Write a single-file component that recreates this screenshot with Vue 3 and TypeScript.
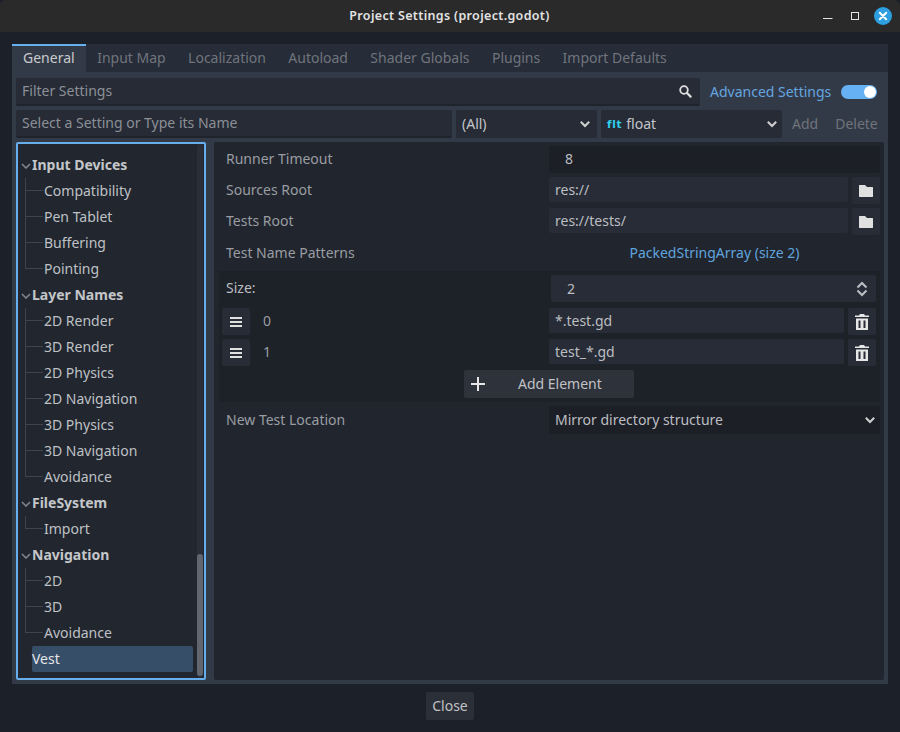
<script setup lang="ts">
const tabs = ['General', 'Input Map', 'Localization', 'Autoload', 'Shader Globals', 'Plugins', 'Import Defaults']
const groups = [
  { name: 'Input Devices', items: ['Compatibility', 'Pen Tablet', 'Buffering', 'Pointing'] },
  { name: 'Layer Names', items: ['2D Render', '3D Render', '2D Physics', '2D Navigation', '3D Physics', '3D Navigation', 'Avoidance'] },
  { name: 'FileSystem', items: ['Import'] },
  { name: 'Navigation', items: ['2D', '3D', 'Avoidance'] },
]
const elements = [
  { index: 0, value: '*.test.gd' },
  { index: 1, value: 'test_*.gd' },
]
</script>

<template>
  <div class="window">
    <header class="titlebar">
      <span class="title">Project Settings (project.godot)</span>
      <div class="controls">
        <svg width="16" height="16" viewBox="0 0 16 16"><path d="M5 10.500h9.500" stroke="#e4e4e4" stroke-width="1" /></svg>
        <svg width="16" height="16" viewBox="0 0 16 16"><rect x="5.500" y="4.500" width="7" height="7" fill="none" stroke="#e4e4e4" stroke-width="1" /></svg>
        <svg width="18" height="18" viewBox="0 0 18 18"><circle cx="9" cy="9" r="9" fill="#2d9fe0" /><path d="M5.800 5.800l6.400 6.400M12.200 5.800l-6.400 6.400" stroke="#fff" stroke-width="2" stroke-linecap="round" /></svg>
      </div>
    </header>

    <main class="content">
      <nav class="tabs">
        <span v-for="(t, i) in tabs" :key="t" class="tab" :class="{ active: i === 0 }">{{ t }}</span>
      </nav>

      <section class="panel">
        <div class="row-filter">
          <div class="input filter">
            <span class="muted">Filter Settings</span>
            <svg width="16" height="16" viewBox="0 0 16 16"><circle cx="7" cy="7" r="3.800" fill="none" stroke="#e0e0e0" stroke-width="1.800" /><path d="M10 10l3.600 3.600" stroke="#e0e0e0" stroke-width="2.200" stroke-linecap="round" /></svg>
          </div>
          <span class="advanced">Advanced Settings</span>
          <span class="toggle"><i></i></span>
        </div>

        <div class="row-add">
          <div class="input name"><span class="muted">Select a Setting or Type its Name</span></div>
          <div class="input select all">
            <span>(All)</span>
            <svg class="chev" width="12" height="8" viewBox="0 0 12 8"><path d="M1.800 1.800L6 6l4.200-4.200" fill="none" stroke="#d0d0d0" stroke-width="2" /></svg>
          </div>
          <div class="input select type">
            <span class="type-label"><b class="flt">flt</b>float</span>
            <svg class="chev" width="12" height="8" viewBox="0 0 12 8"><path d="M1.800 1.800L6 6l4.200-4.200" fill="none" stroke="#d0d0d0" stroke-width="2" /></svg>
          </div>
          <span class="disabled add">Add</span>
          <span class="disabled del">Delete</span>
        </div>

        <div class="split">
          <aside class="tree">
            <div v-for="g in groups" :key="g.name" class="group">
              <div class="head">
                <svg width="10" height="6" viewBox="0 0 10 6"><path d="M1 1l4 4 4-4" fill="none" stroke="#80848b" stroke-width="1.600" /></svg>
                <span>{{ g.name }}</span>
              </div>
              <div class="children">
                <div v-for="item in g.items" :key="item" class="leaf">{{ item }}</div>
              </div>
            </div>
            <div class="vest">Vest</div>
            <div class="scroll"><i></i></div>
          </aside>

          <div class="inspector">
            <div class="prop first">
              <label>Runner Timeout</label>
              <div class="field wide num">8</div>
            </div>
            <div class="prop path">
              <label>Sources Root</label>
              <div class="field grow">res://</div>
              <span class="iconbtn">
                <svg width="14" height="12" viewBox="0 0 14 12"><path d="M0 .5C0 .2.200 0 .5 0H6l2 2h5.500c.3 0 .5.200.5.500V11.500c0 .3-.2.500-.5.500H.5c-.3 0-.5-.2-.5-.5z" fill="#e0e0e0" /></svg>
              </span>
            </div>
            <div class="prop path">
              <label>Tests Root</label>
              <div class="field grow">res://tests/</div>
              <span class="iconbtn">
                <svg width="14" height="12" viewBox="0 0 14 12"><path d="M0 .5C0 .2.200 0 .5 0H6l2 2h5.500c.3 0 .5.200.5.500V11.500c0 .3-.2.500-.5.500H.5c-.3 0-.5-.2-.5-.5z" fill="#e0e0e0" /></svg>
              </span>
            </div>
            <div class="prop link-row">
              <label>Test Name Patterns</label>
              <span class="link">PackedStringArray (size 2)</span>
            </div>

            <div class="array">
              <div class="size-row">
                <label>Size:</label>
                <div class="field size">
                  <span>2</span>
                  <svg width="12" height="16" viewBox="0 0 12 16"><path d="M1.500 6.500L6 2l4.500 4.500M1.500 9.500L6 14l4.500-4.500" fill="none" stroke="#bdbfc3" stroke-width="2" /></svg>
                </div>
              </div>
              <div v-for="e in elements" :key="e.index" class="el-row">
                <span class="handle">
                  <svg width="12" height="10" viewBox="0 0 12 10"><path d="M0 1h12M0 5h12M0 9h12" stroke="#e0e0e0" stroke-width="2" /></svg>
                </span>
                <span class="idx">{{ e.index }}</span>
                <div class="field grow">{{ e.value }}</div>
                <span class="iconbtn">
                  <svg width="14" height="16" viewBox="0 0 14 16"><path d="M5 0h4l1 1.500h4V3H0V1.500h4z" fill="#e6e6e6" /><path d="M1 4.500h12V16H1z" fill="#e6e6e6" /><path d="M3.500 6.500v7.500h2v-7.500zM8.500 6.500v7.500h2v-7.500z" fill="#272c36" /></svg>
                </span>
              </div>
              <div class="add-row">
                <span class="add-el">
                  <svg width="14" height="14" viewBox="0 0 14 14"><path d="M7 0v14M0 7h14" stroke="#e6e6e6" stroke-width="2" /></svg>
                  <span>Add Element</span>
                </span>
              </div>
            </div>

            <div class="prop last">
              <label>New Test Location</label>
              <div class="field wide opt">
                <span>Mirror directory structure</span>
                <svg width="12" height="8" viewBox="0 0 12 8"><path d="M1.800 1.800L6 6l4.200-4.200" fill="none" stroke="#d0d0d0" stroke-width="2" /></svg>
              </div>
            </div>
          </div>
        </div>
      </section>

      <footer class="footer"><span class="close">Close</span></footer>
    </main>
  </div>
</template>

<style>
html, body { margin: 0; background: #1c2028; }
</style>

<style scoped>
.window {
  width: 900px;
  height: 732px;
  display: flex;
  flex-direction: column;
  background: #1c2028;
  font-family: "Noto Sans", sans-serif;
  font-size: 14px;
  line-height: 20px;
  color: #c4c6ca;
  overflow: hidden;
}
.titlebar {
  height: 32px;
  flex: none;
  background: #2a2a2a;
  border-radius: 6px 6px 0 0;
  display: flex;
  align-items: center;
  justify-content: center;
  position: relative;
}
.title {
  font-size: 12.500px;
  font-weight: 600;
  color: #e2e2e2;
  letter-spacing: .33px;
  margin-left: -1px;
}
.controls {
  position: absolute;
  right: 8px;
  top: 7px;
  display: flex;
  align-items: center;
  gap: 12px;
}
.content {
  flex: 1;
  padding: 12px 12px 12px;
  display: flex;
  flex-direction: column;
}
.tabs {
  height: 28px;
  flex: none;
  display: flex;
  background: #262c38;
  color: #70747c;
}
.tab {
  padding: 2px 11.200px 0;
  line-height: 24px;
  box-sizing: border-box;
}
.tab.active {
  width: 74px;
  border-top: 2px solid #66aeec;
  padding: 0 11px;
  background: #333a47;
  color: #c8cacd;
}
.panel {
  height: 612px;
  flex: none;
  background: #333a47;
  padding: 6px 4px 4px;
  box-sizing: border-box;
  display: flex;
  flex-direction: column;
  gap: 4px;
}
.input {
  height: 28px;
  box-sizing: border-box;
  background: #262b36;
  border-bottom: 2px solid #1f232c;
  border-radius: 2px;
  padding: 0 6px;
  display: flex;
  align-items: center;
  justify-content: space-between;
}
.muted { color: #8c9096; }
.row-filter {
  height: 28px;
  display: flex;
  align-items: center;
}
.filter { width: 684px; padding-right: 7px; }
.advanced { margin-left: 10px; color: #64a6e0; }
.toggle {
  margin-left: 10px;
  width: 36px;
  height: 14px;
  border-radius: 7px;
  background: #66b0f4;
  position: relative;
}
.toggle i {
  position: absolute;
  right: 1px;
  top: 1px;
  width: 12px;
  height: 12px;
  border-radius: 50%;
  background: #fff;
}
.row-add {
  height: 28px;
  display: flex;
  align-items: center;
}
.name { width: 436px; }
.select { border-bottom: 0; }
.all { width: 141px; margin-left: 4px; }
.type { width: 181px; margin-left: 4px; padding-right: 4px; }
.type-label { display: flex; align-items: center; }
.flt {
  font-family: "DejaVu Sans", sans-serif;
  font-size: 10.500px;
  font-weight: 700;
  color: #2fd0ee;
  letter-spacing: .7px;
  margin-right: 4px;
}
.disabled { color: #6f737a; }
.add { margin-left: 10px; }
.del { margin-left: 17px; }
.split {
  flex: 1;
  min-height: 0;
  display: flex;
  gap: 8px;
}
.tree {
  width: 190px;
  box-sizing: border-box;
  background: #21262f;
  border: 2px solid #66aeec;
  border-radius: 2px;
  padding: 8px 0 0 14px;
  position: relative;
}
.head {
  height: 26px;
  display: flex;
  align-items: center;
  font-weight: 700;
  color: #c4c6ca;
  margin-left: -11px;
}
.head svg { margin-right: 1px; margin-top: 1px; }
.children {
  margin-left: -6px;
  padding-left: 18px;
  position: relative;
}
.children::before {
  content: "";
  position: absolute;
  left: -1px;
  top: 0;
  bottom: 13px;
  width: 1px;
  background: #3e434c;
}
.leaf {
  height: 26px;
  line-height: 26px;
  position: relative;
  color: #bfc1c5;
}
.leaf::before {
  content: "";
  position: absolute;
  left: -19px;
  top: 12px;
  width: 18px;
  height: 1px;
  background: #3e434c;
}
.vest {
  width: 161px;
  height: 26px;
  line-height: 26px;
  background: #374e68;
  color: #e4e6ea;
  border-radius: 2px;
}
.scroll {
  position: absolute;
  top: 0;
  bottom: 0;
  right: 1px;
  width: 6px;
  background: #292e38;
  border-radius: 3px;
}
.scroll i {
  position: absolute;
  left: 0;
  right: 0;
  top: 410px;
  bottom: 2px;
  background: #62666e;
  border-radius: 3px;
}
.inspector {
  flex: 1;
  background: #21252e;
  padding: 4px 4px 0 5px;
  box-sizing: border-box;
  border-radius: 2px;
  display: flex;
  flex-direction: column;
}
.prop {
  display: flex;
  align-items: flex-start;
}
.prop label { width: 323px; padding-left: 7px; flex: none; color: #9a9da2; }
.field {
  background: #272c36;
  border-radius: 2px;
  box-sizing: border-box;
  padding: 0 6px;
  height: 25px;
  line-height: 25px;
  color: #bcbec2;
}
.first label { line-height: 26px; }
.first .field { background: #1c1f26; }
.wide { width: 331px; }
.num { height: 27px; line-height: 26px; padding-left: 16px; }
.path { margin-top: 4px; gap: 0; }
.path label { line-height: 25px; }
.grow { flex: 1; }
.iconbtn {
  width: 28px;
  height: 27px;
  margin-left: 4px;
  flex: none;
  background: #272c36;
  border-radius: 2px;
  display: flex;
  align-items: center;
  justify-content: center;
}
.link-row {
  height: 30px;
  margin-top: 3px;
  align-items: center;
}
.link-row label { line-height: 30px; }
.link {
  width: 331px;
  text-align: center;
  color: #60a4de;
}
.array {
  margin-top: 3px;
  background: #1d2128;
  border-radius: 2px;
  height: 131px;
  padding: 4px 4px 0 3px;
  box-sizing: border-box;
}
.size-row {
  display: flex;
  height: 27px;
}
.size-row label { width: 325px; padding-left: 4px; color: #bcbec2; line-height: 25px; flex: none; }
.size {
  flex: 1;
  height: 27px;
  line-height: 27px;
  padding: 0 8px 0 16px;
  display: flex;
  align-items: center;
  justify-content: space-between;
}
.el-row {
  display: flex;
  margin-top: 6px;
  height: 25px;
}
.handle {
  width: 28px;
  height: 27px;
  flex: none;
  background: #272c36;
  border-radius: 2px;
  display: flex;
  align-items: center;
  justify-content: center;
}
.idx { width: 299px; padding-left: 13px; box-sizing: border-box; flex: none; color: #9a9da2; line-height: 26px; }
.add-row {
  display: flex;
  justify-content: center;
  margin-top: 6px;
}
.add-el {
  width: 170px;
  height: 28px;
  box-sizing: border-box;
  background: #2e323b;
  border-radius: 2px;
  display: flex;
  align-items: center;
  padding-left: 7px;
  color: #c0c2c6;
}
.add-el span { margin-left: 33px; }
.last { margin-top: 4px; }
.last label { line-height: 28px; }
.opt {
  height: 28px;
  line-height: 28px;
  background: #1c1f26;
  display: flex;
  align-items: center;
  justify-content: space-between;
  padding-right: 4px;
}
.footer {
  margin-top: 8px;
  display: flex;
  justify-content: center;
}
.close {
  width: 48px;
  height: 28px;
  line-height: 28px;
  text-align: center;
  background: #2b2f38;
  border-radius: 2px;
  color: #c0c2c6;
}
</style>
